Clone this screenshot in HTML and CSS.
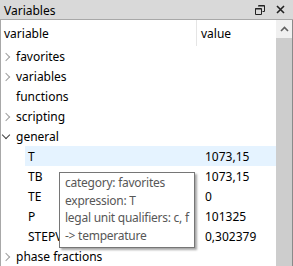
FILE: index.html
```html
<!DOCTYPE html>
<html lang="en">
<head>
  <meta charset="UTF-8" />
  <title>Variables</title>
  <link rel="stylesheet" href="styles.css">
</head>
<body>
  <div class="dock">
    <div class="titlebar">
      <span class="title">Variables</span>
      <span class="tools">
        <svg class="tool" width="10" height="10" viewBox="0 0 10 10">
          <path d="M3.5 0.5h6v6h-2M0.5 3.5h6v6h-6z" fill="none" stroke="#222" stroke-width="1"/>
          <path d="M3 1h6.5M0 4h6.5" stroke="#222" stroke-width="1"/>
        </svg>
        <svg class="tool" width="9" height="9" viewBox="0 0 9 9">
          <path d="M1 1l7 7M8 1l-7 7" stroke="#222" stroke-width="1.6"/>
        </svg>
      </span>
    </div>

    <div class="panel">
      <div class="tree">
        <div class="header">
          <div class="col-name">variable</div>
          <div class="col-value">value</div>
        </div>

        <div class="row"><span class="arrow closed"></span><span class="name">favorites</span></div>
        <div class="row"><span class="arrow closed"></span><span class="name">variables</span></div>
        <div class="row"><span class="arrow"></span><span class="name">functions</span></div>
        <div class="row"><span class="arrow closed"></span><span class="name">scripting</span></div>
        <div class="row"><span class="arrow open"></span><span class="name">general</span></div>

        <div class="row child selected"><span class="name">T</span><span class="value">1073,15</span></div>
        <div class="row child"><span class="name">TB</span><span class="value">1073,15</span></div>
        <div class="row child"><span class="name">TE</span><span class="value">0</span></div>
        <div class="row child"><span class="name">P</span><span class="value">101325</span></div>
        <div class="row child"><span class="name">STEPVALUE</span><span class="value">0,302379</span></div>

        <div class="row"><span class="arrow closed"></span><span class="name">phase fractions</span></div>

        <div class="tooltip">
          category: favorites<br>
          expression: T<br>
          legal unit qualifiers: c, f<br>
          -&gt; temperature
        </div>
      </div>

      <div class="scrollbar">
        <div class="scroll-up">
          <svg width="9" height="6" viewBox="0 0 9 6">
            <path d="M1 5l3.5-3.5L8 5" fill="none" stroke="#606060" stroke-width="1.6"/>
          </svg>
        </div>
        <div class="thumb"></div>
      </div>
    </div>
  </div>
</body>
</html>
```

FILE: styles.css
```css
body {
  margin: 0;
  background: #fff;
  font-family: "Noto Sans", "Open Sans", sans-serif;
  font-size: 12px;
  color: #000;
}
.dock {
  width: 293px;
  height: 266px;
  overflow: hidden;
  display: flex;
  flex-direction: column;
}
.titlebar {
  height: 20px;
  background: #d9d9d9;
  display: flex;
  align-items: center;
  justify-content: space-between;
  padding: 2px 8px 0 4px;
  box-sizing: border-box;
  border-bottom: 1px solid #a8a8a8;
}
.title {
  font-size: 12px;
  color: #000;
}
.tools {
  display: flex;
  align-items: center;
  gap: 11px;
  margin-top: -2px;
}
.panel {
  flex: 1;
  display: flex;
  border-left: 1px solid #a8a8a8;
  border-right: 1px solid #8a8a8a;
  background: #fff;
}
.tree {
  flex: 1;
  position: relative;
}
.header {
  height: 26px;
  display: flex;
  align-items: center;
}
.col-name {
  width: 196px;
  padding-left: 3px;
  padding-top: 1px;
  height: 100%;
  box-sizing: border-box;
  display: flex;
  align-items: center;
  border-right: 1px solid #e5e5e5;
}
.col-value {
  padding-left: 4px;
  padding-top: 1px;
}
.row {
  height: 20px;
  display: flex;
  align-items: center;
  padding-top: 1px;
  box-sizing: border-box;
}
.arrow {
  width: 15px;
  height: 20px;
  display: inline-block;
  position: relative;
}
.arrow.closed::before {
  content: "";
  position: absolute;
  left: 2px;
  top: 7px;
  width: 5px;
  height: 5px;
  border-right: 1.5px solid #a0a0a0;
  border-bottom: 1.5px solid #a0a0a0;
  transform: rotate(-45deg);
}
.arrow.open::before {
  content: "";
  position: absolute;
  left: 2px;
  top: 5px;
  width: 5px;
  height: 5px;
  border-right: 1.5px solid #404040;
  border-bottom: 1.5px solid #404040;
  transform: rotate(45deg);
}
.row.child {
  margin-left: 24px;
  padding-left: 3px;
}
.row.child .name {
  width: 177px;
}
.row.selected {
  background: #e5f3ff;
}
.tooltip {
  position: absolute;
  left: 58px;
  top: 152px;
  padding: 1px 5px 3px 5px;
  border: 1px solid #767676;
  background: #fff;
  color: #575757;
  line-height: 17.5px;
  letter-spacing: -0.25px;
  box-shadow: 2px 2px 2px rgba(0, 0, 0, 0.35);
  white-space: nowrap;
}
.scrollbar {
  width: 16px;
  display: flex;
  flex-direction: column;
  background: #f0f0f0;
}
.scroll-up {
  height: 18px;
  display: flex;
  align-items: center;
  justify-content: center;
}
.thumb {
  flex: 1;
  background: #cdcdcd;
}
```
